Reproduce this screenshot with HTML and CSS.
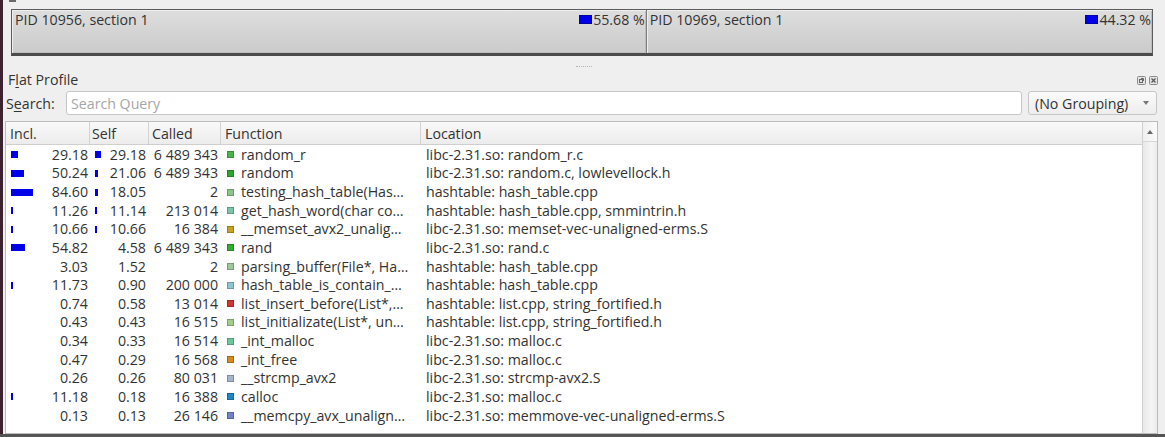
FILE: index.html
```html
<!DOCTYPE html>
<html lang="en">
<head>
<meta charset="utf-8">
<title>Flat Profile</title>
<link rel="stylesheet" href="styles.css">
</head>
<body>
<div class="window">
  <div class="edge"></div>
  <div class="main">
    <div class="grip"></div>
    <div class="sections">
      <div class="section" style="flex: 55.68 1 0">
        <span>PID 10956, section 1</span>
        <span class="pct"><i class="swatch"></i>55.68 %</span>
      </div>
      <div class="section" style="flex: 44.32 1 0">
        <span>PID 10969, section 1</span>
        <span class="pct"><i class="swatch"></i>44.32 %</span>
      </div>
    </div>
    <div class="splitter"><span class="dots"></span></div>
    <div class="dock-title">
      <span>F<u>l</u>at Profile</span>
      <span class="dock-btns">
        <svg width="9" height="9" viewBox="0 0 9 9"><rect x="0.5" y="0.5" width="8" height="8" rx="1" fill="#e4e4e4" stroke="#8a8a8a"/><rect x="2.5" y="3.5" width="3" height="3" fill="none" stroke="#666"/><path d="M4 2.5h2.5v2.5" fill="none" stroke="#666"/></svg>
        <svg width="9" height="9" viewBox="0 0 9 9"><rect x="0.5" y="0.5" width="8" height="8" rx="1" fill="#e4e4e4" stroke="#8a8a8a"/><path d="M2.5 2.5l4 4M6.5 2.5l-4 4" stroke="#555" stroke-width="1.2"/></svg>
      </span>
    </div>
    <div class="search-row">
      <span class="search-label">S<u>e</u>arch:</span>
      <div class="input">Search Query</div>
      <div class="combo"><span>(No Grouping)</span><span class="caret"></span></div>
    </div>
    <div class="table">
      <div class="grid">
        <div class="head">
          <div>Incl.</div><div>Self</div><div>Called</div><div>Function</div><div>Location</div>
        </div>
        <div class="row">
          <div class="c-incl"><i class="bar" style="width:7px"></i><span>29.18</span></div>
          <div class="c-self"><i class="bar" style="width:6px"></i><span>29.18</span></div>
          <div class="c-called">6 489 343</div>
          <div class="c-func"><i class="sq" style="background:#4cb44c"></i><span>random_r</span></div>
          <div class="c-loc">libc-2.31.so: random_r.c</div>
        </div>
        <div class="row">
          <div class="c-incl"><i class="bar" style="width:13px"></i><span>50.24</span></div>
          <div class="c-self"><i class="bar" style="width:3px"></i><span>21.06</span></div>
          <div class="c-called">6 489 343</div>
          <div class="c-func"><i class="sq" style="background:#2ea62e"></i><span>random</span></div>
          <div class="c-loc">libc-2.31.so: random.c, lowlevellock.h</div>
        </div>
        <div class="row">
          <div class="c-incl"><i class="bar" style="width:22px"></i><span>84.60</span></div>
          <div class="c-self"><i class="bar" style="width:3px"></i><span>18.05</span></div>
          <div class="c-called">2</div>
          <div class="c-func"><i class="sq" style="background:#8cc48c"></i><span>testing_hash_table(Has…</span></div>
          <div class="c-loc">hashtable: hash_table.cpp</div>
        </div>
        <div class="row">
          <div class="c-incl"><i class="bar" style="width:2px"></i><span>11.26</span></div>
          <div class="c-self"><i class="bar" style="width:2px"></i><span>11.14</span></div>
          <div class="c-called">213 014</div>
          <div class="c-func"><i class="sq" style="background:#7cc4a8"></i><span>get_hash_word(char co…</span></div>
          <div class="c-loc">hashtable: hash_table.cpp, smmintrin.h</div>
        </div>
        <div class="row">
          <div class="c-incl"><i class="bar" style="width:2px"></i><span>10.66</span></div>
          <div class="c-self"><i class="bar" style="width:2px"></i><span>10.66</span></div>
          <div class="c-called">16 384</div>
          <div class="c-func"><i class="sq" style="background:#c9a124"></i><span>__memset_avx2_unalig…</span></div>
          <div class="c-loc">libc-2.31.so: memset-vec-unaligned-erms.S</div>
        </div>
        <div class="row">
          <div class="c-incl"><i class="bar" style="width:14px"></i><span>54.82</span></div>
          <div class="c-self"><span>4.58</span></div>
          <div class="c-called">6 489 343</div>
          <div class="c-func"><i class="sq" style="background:#30ae30"></i><span>rand</span></div>
          <div class="c-loc">libc-2.31.so: rand.c</div>
        </div>
        <div class="row">
          <div class="c-incl"><span>3.03</span></div>
          <div class="c-self"><span>1.52</span></div>
          <div class="c-called">2</div>
          <div class="c-func"><i class="sq" style="background:#9cc89c"></i><span>parsing_buffer(File*, Ha…</span></div>
          <div class="c-loc">hashtable: hash_table.cpp</div>
        </div>
        <div class="row">
          <div class="c-incl"><i class="bar" style="width:2px"></i><span>11.73</span></div>
          <div class="c-self"><span>0.90</span></div>
          <div class="c-called">200 000</div>
          <div class="c-func"><i class="sq" style="background:#90c4d4"></i><span>hash_table_is_contain_…</span></div>
          <div class="c-loc">hashtable: hash_table.cpp</div>
        </div>
        <div class="row">
          <div class="c-incl"><span>0.74</span></div>
          <div class="c-self"><span>0.58</span></div>
          <div class="c-called">13 014</div>
          <div class="c-func"><i class="sq" style="background:#d23434"></i><span>list_insert_before(List*,…</span></div>
          <div class="c-loc">hashtable: list.cpp, string_fortified.h</div>
        </div>
        <div class="row">
          <div class="c-incl"><span>0.43</span></div>
          <div class="c-self"><span>0.43</span></div>
          <div class="c-called">16 515</div>
          <div class="c-func"><i class="sq" style="background:#a0cc8c"></i><span>list_initializate(List*, un…</span></div>
          <div class="c-loc">hashtable: list.cpp, string_fortified.h</div>
        </div>
        <div class="row">
          <div class="c-incl"><span>0.34</span></div>
          <div class="c-self"><span>0.33</span></div>
          <div class="c-called">16 514</div>
          <div class="c-func"><i class="sq" style="background:#6cc89c"></i><span>_int_malloc</span></div>
          <div class="c-loc">libc-2.31.so: malloc.c</div>
        </div>
        <div class="row">
          <div class="c-incl"><span>0.47</span></div>
          <div class="c-self"><span>0.29</span></div>
          <div class="c-called">16 568</div>
          <div class="c-func"><i class="sq" style="background:#d88a1c"></i><span>_int_free</span></div>
          <div class="c-loc">libc-2.31.so: malloc.c</div>
        </div>
        <div class="row">
          <div class="c-incl"><span>0.26</span></div>
          <div class="c-self"><span>0.26</span></div>
          <div class="c-called">80 031</div>
          <div class="c-func"><i class="sq" style="background:#a4b4cc"></i><span>__strcmp_avx2</span></div>
          <div class="c-loc">libc-2.31.so: strcmp-avx2.S</div>
        </div>
        <div class="row">
          <div class="c-incl"><i class="bar" style="width:2px"></i><span>11.18</span></div>
          <div class="c-self"><span>0.18</span></div>
          <div class="c-called">16 388</div>
          <div class="c-func"><i class="sq" style="background:#1c86c8"></i><span>calloc</span></div>
          <div class="c-loc">libc-2.31.so: malloc.c</div>
        </div>
        <div class="row">
          <div class="c-incl"><span>0.13</span></div>
          <div class="c-self"><span>0.13</span></div>
          <div class="c-called">26 146</div>
          <div class="c-func"><i class="sq" style="background:#7282c4"></i><span>__memcpy_avx_unalign…</span></div>
          <div class="c-loc">libc-2.31.so: memmove-vec-unaligned-erms.S</div>
        </div>
      </div>
      <div class="scroll">
        <div class="scroll-up"><span class="up"></span></div>
      </div>
    </div>
  </div>
</div>
<div class="bottom-border"></div>
</body>
</html>
```

FILE: styles.css
```css
* { box-sizing: border-box; }
html, body { margin: 0; height: 437px; overflow: hidden; }
body {
  background: #efefef;
  font-family: "Open Sans", "Noto Sans", sans-serif;
  font-size: 14.2px;
  color: #333;
}
i { display: block; font-style: normal; }
u { text-decoration-thickness: 1px; text-underline-offset: 2px; }

.window { display: flex; height: 434px; overflow: hidden; }
.edge { flex: none; width: 3px; background: #3b2430; }
.main { flex: 1; display: flex; flex-direction: column; min-width: 0; }
.bottom-border { height: 3px; background: #555; }

.grip { flex: none; width: 7px; height: 2px; margin-left: 6px; background: #6a6a6a; }

.sections {
  display: flex;
  height: 47px;
  margin: 7px 12px 0 8px;
  border: 1px solid #5c5c5c;
  border-bottom: 3px solid #4c4c4c;
  flex: none;
}
.section {
  display: flex;
  justify-content: space-between;
  align-items: flex-start;
  min-width: 0;
  padding: 0 1px 0 3px;
  line-height: 19px;
  background: linear-gradient(#dedede, #d3d3d3 55%, #cbcbcb);
  box-shadow: inset 1px 1px 0 #efefef, inset -1px -1px 0 #bdbdbd;
}
.section + .section { border-left: 1px solid #7c7c7c; }
.pct { display: flex; align-items: center; gap: 1px; }
.swatch { width: 13px; height: 9px; background: #0000e8; border: 1px solid #0000a8; }

.splitter {
  flex: none;
  height: 14px;
  display: flex;
  justify-content: center;
  align-items: flex-end;
  padding-bottom: 3px;
}
.dots { width: 16px; height: 1px; border-top: 1px dotted #b4b4b4; }

.dock-title {
  flex: none;
  height: 19px;
  display: flex;
  justify-content: space-between;
  align-items: center;
  padding: 0 7px 0 5px;
}
.dock-btns { display: flex; gap: 3px; margin-top: 2px; }
.dock-btns svg { display: block; }

.search-row {
  flex: none;
  display: flex;
  align-items: center;
  height: 24px;
  margin-top: 2px;
  padding: 0 8px 0 3px;
  gap: 5px;
}
.search-label { width: 55px; }
.input {
  flex: 1;
  height: 24px;
  display: flex;
  align-items: center;
  padding: 0 4px;
  background: #fff;
  border: 1px solid #c6c6c6;
  border-radius: 3px;
  color: #a6a6a6;
}
.combo {
  flex: none;
  width: 129px;
  height: 24px;
  margin-left: 1px;
  display: flex;
  align-items: center;
  justify-content: space-between;
  padding: 0 7px 0 6px;
  background: linear-gradient(#fbfbfb, #ededed);
  border: 1px solid #c6c6c6;
  border-radius: 3px;
}
.caret {
  width: 0; height: 0;
  border-left: 3.5px solid transparent;
  border-right: 3.5px solid transparent;
  border-top: 4px solid #777;
}

.table {
  flex: 1;
  min-height: 0;
  display: flex;
  margin: 6px 7px 0 2px;
  border: 1px solid #bcbcbc;
  background: #fff;
}
.grid { flex: 1; min-width: 0; overflow: hidden; }
.head, .row {
  display: grid;
  grid-template-columns: 84px 59px 72px 200px 1fr;
}
.head {
  height: 23px;
  background: linear-gradient(#f9f9f9, #ececec);
  border-bottom: 1px solid #cfcfcf;
}
.head > div {
  display: flex;
  align-items: center;
  padding-left: 4px;
  border-right: 1px solid #d2d2d2;
}
.head > div:nth-child(2) { padding-left: 2px; }
.head > div:nth-child(3) { padding-left: 3px; }
.head > div:last-child { border-right: none; }

.row { height: 18.64px; align-items: center; line-height: 18px; white-space: nowrap; padding-top: 1px; }
.row > div { overflow: hidden; }
.c-incl, .c-self { display: flex; align-items: center; justify-content: space-between; }
.c-incl { padding: 0 2px 0 5px; }
.c-self { padding: 0 3px 0 5px; }
.c-incl span, .c-self span { margin-left: auto; }
.bar { height: 7px; background: #0000e8; flex: none; }
.c-called { text-align: right; padding-right: 3px; }
.c-func { display: flex; align-items: center; gap: 7px; padding-left: 6px; }
.sq { flex: none; width: 7px; height: 7px; border: 1px solid rgba(0, 0, 0, 0.22); }
.c-loc { padding-left: 5px; }

.scroll {
  flex: none;
  width: 15px;
  border-left: 1px solid #d0d0d0;
  background: linear-gradient(90deg, #e9e9e9, #f5f5f5 60%, #ececec);
}
.scroll-up {
  height: 20px;
  display: flex;
  justify-content: center;
  align-items: center;
  border-bottom: 1px solid #d6d6d6;
  background: linear-gradient(90deg, #f0f0f0, #fafafa);
}
.up {
  width: 0; height: 0;
  border-left: 3.5px solid transparent;
  border-right: 3.5px solid transparent;
  border-bottom: 4px solid #666;
}
```
